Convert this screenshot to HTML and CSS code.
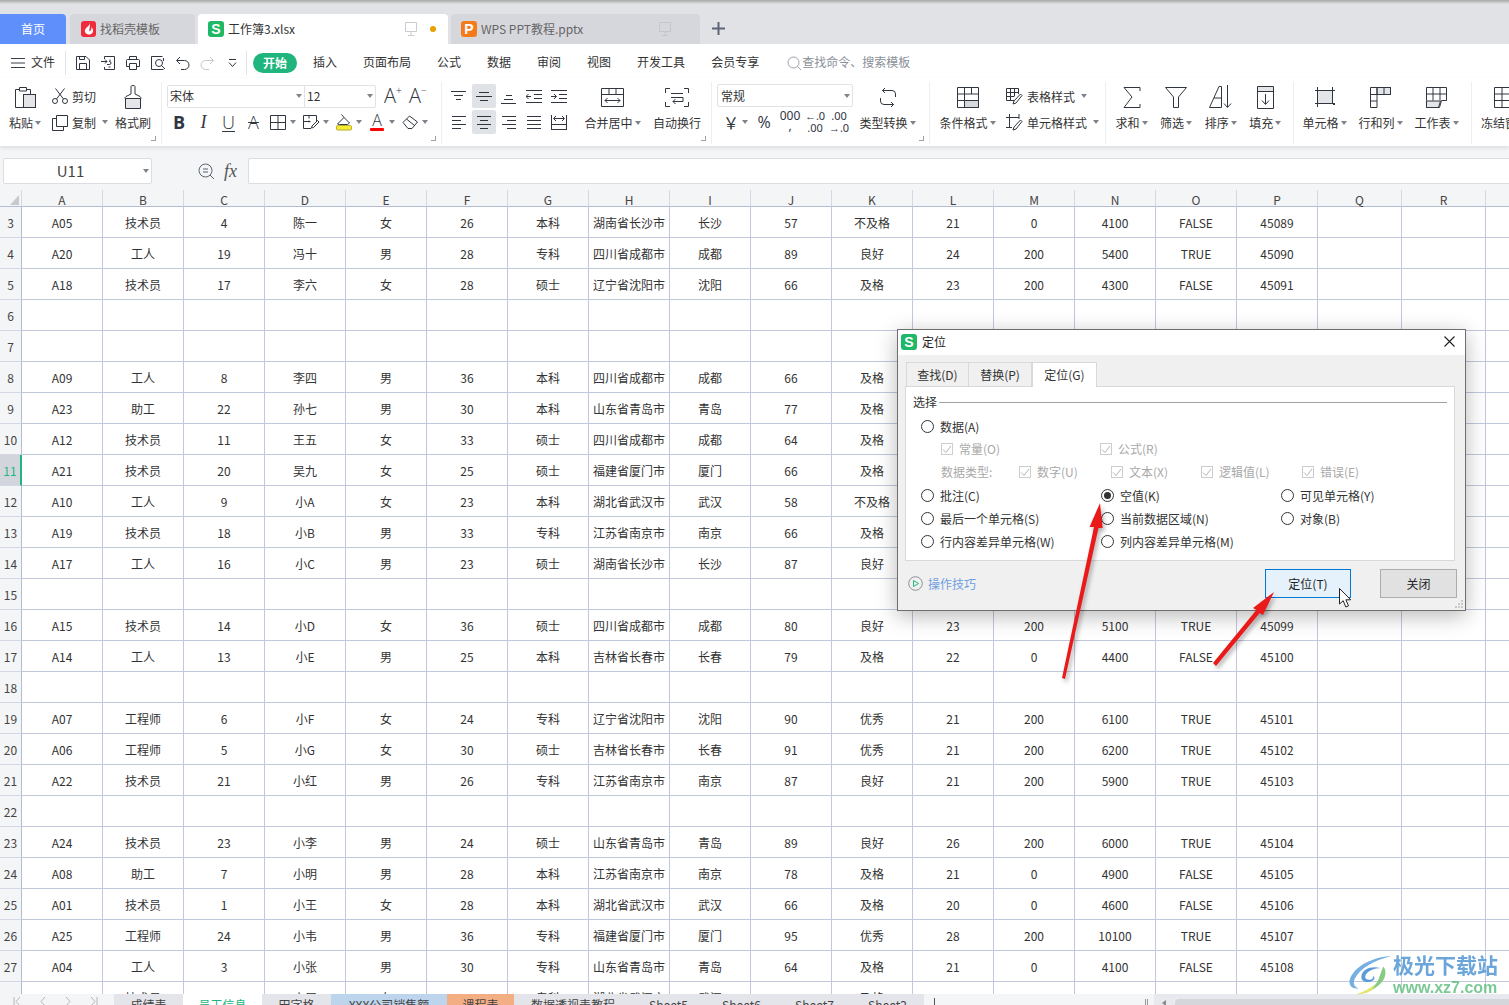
FILE: index.html
```html
<!DOCTYPE html>
<html lang="zh-CN">
<head>
<meta charset="utf-8">
<title>工作簿3.xlsx</title>
<link rel="stylesheet" href="styles.css">
</head>
<body>
<div class="app">
  <div class="topline"></div>
  <nav class="doctabs">
    <div class="dt dt-home">首页</div>
    <div class="dt dt-off dt-tpl">
      <span class="logo logo-red"><svg width="10" height="12" viewBox="0 0 10 12"><path d="M5.500 0C6 3 2 4 1 7c-.6 2.300 1.200 4.500 4 4.500 2.500 0 4.500-2 4-4.500-.3-1.500-1-2.500-1.500-3C7.500 6 7 7.500 5.500 8.500 4.800 6 6.800 3 5.500 0z" fill="#fff"/></svg></span>
      <span>找稻壳模板</span>
    </div>
    <div class="dt dt-on">
      <span class="logo logo-green">S</span>
      <span class="dt-name">工作簿3.xlsx</span>
      <svg class="mon" width="12" height="14" viewBox="0 0 12 14"><path d="M.500.500h11v9H.500zM6 9.500v4M3 13.500h6" fill="none" stroke="#c6ccd2"/></svg>
      <i class="dot"></i>
    </div>
    <div class="dt dt-off dt-ppt">
      <span class="logo logo-orange">P</span>
      <span class="dt-name">WPS PPT教程.pptx</span>
      <svg class="mon" width="12" height="14" viewBox="0 0 12 14"><path d="M.500.500h11v9H.500zM6 9.500v4M3 13.500h6" fill="none" stroke="#c3c6cb"/></svg>
    </div>
    <svg class="plus" width="13" height="13" viewBox="0 0 13 13"><path d="M6.500 0v13M0 6.500h13" stroke="#5c6675" stroke-width="2"/></svg>
  </nav>

  <div class="menubar">
    <svg class="burger" width="14" height="10" viewBox="0 0 14 10"><path d="M0 .500h14M0 5h14M0 9.500h14" stroke="#39404a"/></svg>
    <span class="file">文件</span>
    <i class="vsep vsep-a"></i>
    <span class="qa"><svg class="ic" width="16" height="16" viewBox="0 0 16 16"><path d="M1.500 1.500h9.500l3.500 3.500v9.500h-13zM4.500 14.500v-6h7v6M4.500 1.500v3h5v-3"/></svg></span>
    <span class="qa"><svg class="ic" width="16" height="16" viewBox="0 0 16 16"><path d="M4.500 4V1.500h10v13h-10V12M1 6.500h6M5 4.500l2 2-2 2M7 9.500h2.500a1.500 1.500 0 0 0 0-3H9M10 6.500V4.500M8.500 12h2"/></svg></span>
    <span class="qa"><svg class="ic" width="16" height="16" viewBox="0 0 16 16"><path d="M4.500 5V1.500h7V5M4.500 11.500h-3v-6q0-1 1-1h11q1 0 1 1v6h-3M4.500 8.500h7v6h-7z"/></svg></span>
    <span class="qa"><svg class="ic" width="16" height="16" viewBox="0 0 16 16"><path d="M12.500 1.500h-11v13h12M13.500 3v3"/><circle cx="9" cy="8" r="3.500"/><path d="M11.500 10.500l3.500 3.500"/></svg></span>
    <span class="qa"><svg class="ic" width="15" height="15" viewBox="0 0 15 15"><path d="M5 1L1.500 4.500 5 8M2 4.500h7.500a4.500 4.500 0 0 1 0 9H6"/></svg></span>
    <span class="qa"><svg class="ic ic-off" width="15" height="15" viewBox="0 0 15 15"><path d="M10 1l3.500 3.500L10 8M13 4.500H5.500a4.500 4.500 0 0 0 0 9H9"/></svg></span>
    <span class="qa"><svg class="ic" width="9" height="9" viewBox="0 0 9 9"><path d="M1 .500h7M1 3.500l3.500 4 3.500-4"/></svg></span>
    <i class="vsep vsep-b"></i>
    <span class="pill">开始</span>
    <div class="mtabs">
      <span>插入</span><span>页面布局</span><span>公式</span><span>数据</span><span>审阅</span><span>视图</span><span>开发工具</span><span>会员专享</span>
    </div>
    <div class="msearch">
      <svg width="15" height="15" viewBox="0 0 15 15"><circle cx="6.500" cy="6.500" r="5.500" fill="none" stroke="#9aa1ab"/><path d="M10.500 10.500l3.500 3.500" stroke="#9aa1ab"/></svg>
      <span>查找命令、搜索模板</span>
    </div>
  </div>

  <div class="ribbon">
    <section class="group g1">
      <div class="big b-paste">
        <svg class="ic" width="22" height="24" viewBox="0 0 22 24"><path d="M9 22.500H1.500v-18h4M12.500 4.500h4V9M5.500 2.500h7v3.500h-7z"/><rect class="fillg" x="9.500" y="9.500" width="12" height="13"/></svg>
        <span class="lbl">粘贴<i class="caret"></i></span>
      </div>
      <div class="col c-clip">
        <div class="small"><svg class="ic" width="16" height="16" viewBox="0 0 16 16"><circle cx="3" cy="13" r="2.500"/><circle cx="13" cy="13" r="2.500"/><path d="M4.500 11L12.500.500M11.500 11L3.500.500"/></svg><span>剪切</span></div>
        <div class="small"><svg class="ic" width="16" height="17" viewBox="0 0 16 17"><path d="M4.500 12.500v-11h11v11zM4.500 4.500h-4v12h11v-4"/></svg><span>复制</span><i class="caret"></i></div>
      </div>
      <div class="big b-brush">
        <svg class="ic" width="18" height="25" viewBox="0 0 18 25"><path d="M7 9V1.500q0-1 2-1t2 1V9l5 2.500q1 .5 1 2v0H1v0q0-1.500 1-2z"/><path class="fillg" d="M1.500 13.500h15v10h-15z"/></svg>
        <span class="lbl">格式刷</span>
      </div>
      <i class="launch"></i>
    </section>

    <section class="group g2">
      <div class="col">
        <div class="r-font">
          <div class="combo combo-font">
            <span class="cb-a">宋体<i class="caret"></i></span>
            <span class="cb-b">12<i class="caret"></i></span>
          </div>
          <span class="glyph g-plus">A<sup>+</sup></span>
          <span class="glyph g-minus">A<sup>−</sup></span>
        </div>
        <div class="r-fmt">
          <span class="fb f-b">B</span>
          <span class="fb f-i">I</span>
          <span class="fb f-u">U</span>
          <span class="fb f-s">A</span>
          <span class="fbc"><span class="fb"><svg class="ic" width="16" height="15" viewBox="0 0 16 15"><path d="M.500.500h15v14H.500zM8 .500v14M.500 7.500h15"/></svg></span><i class="caret"></i></span>
          <span class="fbc"><span class="fb"><svg class="ic" width="17" height="16" viewBox="0 0 17 16"><path d="M8 14.500H.500v-13h13v6M.500 7.500h7M6 1.500v3M6 6.500v2M16 8l-1.500-1.500L9 12l-.500 2 2-.500z"/></svg></span><i class="caret"></i></span>
          <span class="fbc"><span class="fb"><svg class="ic" width="17" height="18" viewBox="0 0 17 18"><path d="M1.500 11L8 4.500l5.500 5.500-2 1.500H3.500zM8 4.500L5.500 1.500"/><rect x=".500" y="12.500" width="15" height="4.500" rx="1" fill="#f7ee2e" stroke="#b9ad3c"/></svg></span><i class="caret"></i></span>
          <span class="fbc"><span class="fb f-color">A</span><i class="caret"></i></span>
          <span class="fbc"><span class="fb"><svg class="ic" width="17" height="14" viewBox="0 0 17 14"><path d="M1 7.500l6.500-6.500 8 6-5.500 6.500H6zM4.500 4l8 6.500" /></svg></span><i class="caret"></i></span>
        </div>
      </div>
      <i class="launch"></i>
    </section>

    <section class="group g3">
      <div class="aligns">
        <span class="al"><svg class="ic" width="16" height="11" viewBox="0 0 16 11"><path d="M0 .500h15M3 4.500h9M5 8.500h5"/></svg></span>
        <span class="al al-on"><svg class="ic" width="16" height="9" viewBox="0 0 16 9"><path d="M3 .500h10M0 4.500h16M4 8.500h8"/></svg></span>
        <span class="al"><svg class="ic al-low" width="16" height="9" viewBox="0 0 16 9"><path d="M5 .500h6M3 4.500h9M0 8.500h15"/></svg></span>
        <span class="al"><svg class="ic" width="16" height="13" viewBox="0 0 16 13"><path d="M0 .500h16M8 4.500h8M8 8.500h8M0 12.500h16M5 6.500H0M2.500 4L0 6.500 2.500 9"/></svg></span>
        <span class="al"><svg class="ic" width="16" height="13" viewBox="0 0 16 13"><path d="M0 .500h16M8 4.500h8M8 8.500h8M0 12.500h16M0 6.500h5M3 4l2.500 2.500L3 9"/></svg></span>
        <span class="al"><svg class="ic" width="14" height="13" viewBox="0 0 14 13"><path d="M0 .500h14M0 4.500h9M0 8.500h14M0 12.500h9"/></svg></span>
        <span class="al al-on"><svg class="ic" width="14" height="13" viewBox="0 0 14 13"><path d="M0 .500h14M3 4.500h8M0 8.500h14M3 12.500h8"/></svg></span>
        <span class="al"><svg class="ic" width="14" height="13" viewBox="0 0 14 13"><path d="M0 .500h14M5 4.500h9M0 8.500h14M5 12.500h9"/></svg></span>
        <span class="al"><svg class="ic" width="14" height="13" viewBox="0 0 14 13"><path d="M0 .500h14M0 4.500h14M0 8.500h14M0 12.500h14"/></svg></span>
        <span class="al"><svg class="ic" width="16" height="15" viewBox="0 0 16 15"><path d="M.500 0v15M15.500 0v15M.500 14.500h15M.500 9.500h15M3 3.500h10M5 1L2.500 3.500 5 6M11 1l2.500 2.500L11 6"/></svg></span>
      </div>
      <div class="big b-merge">
        <svg class="ic" width="23" height="19" viewBox="0 0 23 19"><path d="M.500.500h22v18H.500zM.500 6.500h22M8 .500v6M15 .500v6M4 12.500h15M6.500 10L4 12.500 6.500 15M16.500 10l2.500 2.500-2.500 2.500"/></svg>
        <span class="lbl">合并居中<i class="caret"></i></span>
      </div>
      <div class="big b-wrap">
        <svg class="ic" width="24" height="19" viewBox="0 0 24 19"><path d="M5 .500H.500V5M19 .500h4.500V5M5 18.500H.500V14M19 18.500h4.500V14M6 5.500h12M6 9.500h12v4H8M10.500 11L8 13.500l2.500 2.500"/></svg>
        <span class="lbl">自动换行</span>
      </div>
      <i class="launch"></i>
    </section>

    <section class="group g4">
      <div class="col">
        <div class="combo combo-num"><span class="cb-a">常规<i class="caret"></i></span></div>
        <div class="r-num">
          <span class="n n-yen">￥</span><i class="caret"></i>
          <span class="n n-pct">%</span>
          <span class="n n-th">000<br>,</span>
          <span class="n n-sm">←.0<br>.00</span>
          <span class="n n-sm">.00<br>→.0</span>
        </div>
      </div>
      <div class="big b-conv">
        <svg class="ic" width="18" height="21" viewBox="0 0 18 21"><path d="M6 1L3.500 3.500 6 6M3.500 3.500H13q3.500 0 3.500 3.500v3M12 20l2.500-2.500L12 15M14.500 17.500H5q-3.500 0-3.500-3.500v-3"/></svg>
        <span class="lbl">类型转换<i class="caret"></i></span>
      </div>
      <i class="launch"></i>
    </section>

    <section class="group g5">
      <div class="big b-cond">
        <svg class="ic" width="22" height="21" viewBox="0 0 22 21"><path d="M.500.500h21v20H.500zM.500 7h21M.500 13.500h21M7.500.500v20M14.500.500v6.500"/><rect class="fillg2" x="7.500" y="13.500" width="14" height="7"/></svg>
        <span class="lbl">条件格式<i class="caret"></i></span>
      </div>
      <div class="col c-style">
        <div class="small"><svg class="ic" width="17" height="17" viewBox="0 0 17 17"><path d="M8 12.500H.500V.500h12V6M.500 4.500h12M.500 8.500h8M4.500.500v12M8.500.500V8M16 7.500L14.500 6 8 13l-1 3 3-1z"/></svg><span>表格样式</span><i class="caret"></i></div>
        <div class="small"><svg class="ic" width="17" height="17" viewBox="0 0 17 17"><path d="M3.500 0v14M0 3.500h13M13 0v5M0 13.500h6M16 7.500L14.500 6 8 13l-1 3 3-1z"/></svg><span>单元格样式</span><i class="caret"></i></div>
      </div>
    </section>

    <section class="group g6">
      <div class="big b4"><svg class="ic" width="18" height="21" viewBox="0 0 18 21"><path d="M17 4V.500H1L9 10 1 20.500h16V17"/></svg><span class="lbl">求和<i class="caret"></i></span></div>
      <div class="big b4"><svg class="ic" width="22" height="21" viewBox="0 0 22 21"><path d="M.500.500h21L13.500 10v10.500h-5V10z"/></svg><span class="lbl">筛选<i class="caret"></i></span></div>
      <div class="big b4"><svg class="ic" width="24" height="24" viewBox="0 0 24 24"><path d="M.500 22.500L10 1.500h2.500v21zM5 13h7.500M18.500 0v22M15 18.500l3.500 4 3.500-4"/></svg><span class="lbl">排序<i class="caret"></i></span></div>
      <div class="big b4"><svg class="ic" width="17" height="23" viewBox="0 0 17 23"><path d="M1 1h15v4H1z" fill="#e3e5e8" stroke="none"/><path d="M.500.500h16v22H.500zM.500 5.500h16M8.500 8v10M5 14.500l3.500 4 3.500-4"/></svg><span class="lbl">填充<i class="caret"></i></span></div>
    </section>

    <section class="group g7">
      <div class="big b3"><svg class="ic" width="20" height="20" viewBox="0 0 20 20"><rect class="fillg" x="2.500" y="3.500" width="15" height="13"/><path d="M0 3.500h20M0 16.500h17M2.500 0v20M17.500 0v16"/><rect x="18" y="16" width="2" height="2" fill="#30363f" stroke="none"/></svg><span class="lbl">单元格<i class="caret"></i></span></div>
      <div class="big b3"><svg class="ic" width="21" height="21" viewBox="0 0 21 21"><rect class="fillg" x="7" y=".500" width="13.500" height="7"/><path d="M.500 20.500V.500h20v7H7v13zM.500 7.500H7M.500 14h6.500M7 .500v7M14 .500v7"/></svg><span class="lbl">行和列<i class="caret"></i></span></div>
      <div class="big b3"><svg class="ic" width="21" height="21" viewBox="0 0 21 21"><path class="fillg" d="M.500 14h14l-2 6.500H.500z"/><path d="M.500 13.500V.500h20v13h-5l-2 7H.500zM.500 7h20M7 .500V13.500M14 .500v13"/></svg><span class="lbl">工作表<i class="caret"></i></span></div>
    </section>

    <section class="group g8">
      <div class="big b-freeze"><svg class="ic" width="22" height="21" viewBox="0 0 22 21"><path d="M.500.500h21v20H.500zM.500 7h21M.500 13.500h21M8 .500v20"/></svg><span class="lbl">冻结窗格</span></div>
    </section>
  </div>

  <div class="fbar">
    <div class="namebox"><span>U11</span><i class="caret"></i></div>
    <svg class="zoomic" width="17" height="17" viewBox="0 0 17 17"><circle cx="7.500" cy="7.500" r="6.500" fill="none" stroke="#5b6470"/><path d="M12 12l4 4M5 6h5M5 9h5" stroke="#5b6470"/></svg>
    <span class="fx">fx</span>
    <div class="finput"></div>
  </div>

  <div class="sheet">
    <table class="grid">
      <colgroup><col class="c-rh"><col span="16" class="c-n"><col span="2" class="c-w"><col class="c-e"></colgroup>
      <thead><tr><th class="corner"><i></i></th><th>A</th><th>B</th><th>C</th><th>D</th><th>E</th><th>F</th><th>G</th><th>H</th><th>I</th><th>J</th><th>K</th><th>L</th><th>M</th><th>N</th><th>O</th><th>P</th><th>Q</th><th>R</th><th></th></tr></thead>
      <tbody>
<tr><th>3</th><td>A05<td>技术员<td>4<td>陈一<td>女<td>26<td>本科<td>湖南省长沙市<td>长沙<td>57<td>不及格<td>21<td>0<td>4100<td>FALSE<td>45089<td><td><td></tr>
<tr><th>4</th><td>A20<td>工人<td>19<td>冯十<td>男<td>28<td>专科<td>四川省成都市<td>成都<td>89<td>良好<td>24<td>200<td>5400<td>TRUE<td>45090<td><td><td></tr>
<tr><th>5</th><td>A18<td>技术员<td>17<td>李六<td>女<td>28<td>硕士<td>辽宁省沈阳市<td>沈阳<td>66<td>及格<td>23<td>200<td>4300<td>FALSE<td>45091<td><td><td></tr>
<tr><th>6</th><td><td><td><td><td><td><td><td><td><td><td><td><td><td><td><td><td><td><td></tr>
<tr><th>7</th><td><td><td><td><td><td><td><td><td><td><td><td><td><td><td><td><td><td><td></tr>
<tr><th>8</th><td>A09<td>工人<td>8<td>李四<td>男<td>36<td>本科<td>四川省成都市<td>成都<td>66<td>及格<td><td><td><td><td><td><td><td></tr>
<tr><th>9</th><td>A23<td>助工<td>22<td>孙七<td>男<td>30<td>本科<td>山东省青岛市<td>青岛<td>77<td>及格<td><td><td><td><td><td><td><td></tr>
<tr><th>10</th><td>A12<td>技术员<td>11<td>王五<td>女<td>33<td>硕士<td>四川省成都市<td>成都<td>64<td>及格<td><td><td><td><td><td><td><td></tr>
<tr><th class="cur">11</th><td>A21<td>技术员<td>20<td>吴九<td>女<td>25<td>硕士<td>福建省厦门市<td>厦门<td>66<td>及格<td><td><td><td><td><td><td><td></tr>
<tr><th>12</th><td>A10<td>工人<td>9<td>小A<td>女<td>23<td>本科<td>湖北省武汉市<td>武汉<td>58<td>不及格<td><td><td><td><td><td><td><td></tr>
<tr><th>13</th><td>A19<td>技术员<td>18<td>小B<td>男<td>33<td>专科<td>江苏省南京市<td>南京<td>66<td>及格<td><td><td><td><td><td><td><td></tr>
<tr><th>14</th><td>A17<td>工人<td>16<td>小C<td>男<td>23<td>硕士<td>湖南省长沙市<td>长沙<td>87<td>良好<td><td><td><td><td><td><td><td></tr>
<tr><th>15</th><td><td><td><td><td><td><td><td><td><td><td><td><td><td><td><td><td><td><td></tr>
<tr><th>16</th><td>A15<td>技术员<td>14<td>小D<td>女<td>36<td>硕士<td>四川省成都市<td>成都<td>80<td>良好<td>23<td>200<td>5100<td>TRUE<td>45099<td><td><td></tr>
<tr><th>17</th><td>A14<td>工人<td>13<td>小E<td>男<td>25<td>本科<td>吉林省长春市<td>长春<td>79<td>及格<td>22<td>0<td>4400<td>FALSE<td>45100<td><td><td></tr>
<tr><th>18</th><td><td><td><td><td><td><td><td><td><td><td><td><td><td><td><td><td><td><td></tr>
<tr><th>19</th><td>A07<td>工程师<td>6<td>小F<td>女<td>24<td>专科<td>辽宁省沈阳市<td>沈阳<td>90<td>优秀<td>21<td>200<td>6100<td>TRUE<td>45101<td><td><td></tr>
<tr><th>20</th><td>A06<td>工程师<td>5<td>小G<td>女<td>30<td>硕士<td>吉林省长春市<td>长春<td>91<td>优秀<td>21<td>200<td>6200<td>TRUE<td>45102<td><td><td></tr>
<tr><th>21</th><td>A22<td>技术员<td>21<td>小红<td>男<td>26<td>专科<td>江苏省南京市<td>南京<td>87<td>良好<td>21<td>200<td>5900<td>TRUE<td>45103<td><td><td></tr>
<tr><th>22</th><td><td><td><td><td><td><td><td><td><td><td><td><td><td><td><td><td><td><td></tr>
<tr><th>23</th><td>A24<td>技术员<td>23<td>小李<td>男<td>24<td>硕士<td>山东省青岛市<td>青岛<td>89<td>良好<td>26<td>200<td>6000<td>TRUE<td>45104<td><td><td></tr>
<tr><th>24</th><td>A08<td>助工<td>7<td>小明<td>男<td>28<td>本科<td>江苏省南京市<td>南京<td>78<td>及格<td>21<td>0<td>4900<td>FALSE<td>45105<td><td><td></tr>
<tr><th>25</th><td>A01<td>技术员<td>1<td>小王<td>女<td>28<td>本科<td>湖北省武汉市<td>武汉<td>66<td>及格<td>20<td>0<td>4600<td>FALSE<td>45106<td><td><td></tr>
<tr><th>26</th><td>A25<td>工程师<td>24<td>小韦<td>男<td>36<td>专科<td>福建省厦门市<td>厦门<td>95<td>优秀<td>28<td>200<td>10100<td>TRUE<td>45107<td><td><td></tr>
<tr><th>27</th><td>A04<td>工人<td>3<td>小张<td>男<td>30<td>专科<td>山东省青岛市<td>青岛<td>64<td>及格<td>21<td>0<td>4100<td>FALSE<td>45108<td><td><td></tr>
<tr><th>28</th><td>A13<td>技术员<td>12<td>小周<td>女<td>30<td>专科<td>湖北省武汉市<td>武汉<td>72<td>及格<td>21<td>0<td>4300<td>FALSE<td>45109<td><td><td></tr>
      </tbody>
    </table>
  </div>

  <div class="sheetbar">
    <div class="snav">
      <svg width="8" height="9" viewBox="0 0 8 9"><path d="M1 0v9M7 0L3 4.500 7 9" fill="none" stroke="#b3b7bf"/></svg>
      <svg width="6" height="9" viewBox="0 0 6 9"><path d="M5 0L1 4.500 5 9" fill="none" stroke="#b3b7bf"/></svg>
      <svg width="6" height="9" viewBox="0 0 6 9"><path d="M1 0l4 4.500L1 9" fill="none" stroke="#b3b7bf"/></svg>
      <svg width="8" height="9" viewBox="0 0 8 9"><path d="M7 0v9M1 0l4 4.500L1 9" fill="none" stroke="#b3b7bf"/></svg>
    </div>
    <span class="st st1">成绩表</span>
    <span class="st st2">员工信息</span>
    <span class="st st1">田字格</span>
    <span class="st st3">XXX公司销售额</span>
    <span class="st st4">课程表</span>
    <span class="st st5">数据透视表教程</span>
    <span class="st st6">Sheet5</span>
    <span class="st st6">Sheet6</span>
    <span class="st st6">Sheet7</span>
    <span class="st st6">Sheet2</span>
    <i class="sb-line"></i>
    <i class="sb-grip"></i>
    <div class="hscroll"><i class="hs-arrow"></i><i class="hs-thumb"></i></div>
  </div>
</div>

<div class="dialog">
  <div class="dlg-title">
    <span class="logo logo-green logo-dlg">S</span>
    <span class="dlg-name">定位</span>
    <svg class="dlg-x" width="11" height="11" viewBox="0 0 11 11"><path d="M.500.500l10 10M10.500.500l-10 10" stroke="#1f1f1f" stroke-width="1.100"/></svg>
  </div>
  <div class="dlg-tabs">
    <span class="dtab t1">查找(D)</span>
    <span class="dtab t1">替换(P)</span>
    <span class="dtab t-on">定位(G)</span>
  </div>
  <div class="panel">
    <div class="legend"><span>选择</span><i></i></div>
    <div class="opts">
      <div class="row"><label class="rd"><i class="radio"></i>数据(A)</label></div>
      <div class="row row-sub">
        <label class="ck"><i class="cbx"><svg width="10" height="9" viewBox="0 0 10 9"><path d="M1 4.500l3 3L9 1" fill="none" stroke="#b4b4b4"/></svg></i>常量(O)</label>
        <label class="ck"><i class="cbx"><svg width="10" height="9" viewBox="0 0 10 9"><path d="M1 4.500l3 3L9 1" fill="none" stroke="#b4b4b4"/></svg></i>公式(R)</label>
      </div>
      <div class="row row-type">
        <span class="ck">数据类型:</span>
        <label class="ck"><i class="cbx"><svg width="10" height="9" viewBox="0 0 10 9"><path d="M1 4.500l3 3L9 1" fill="none" stroke="#b4b4b4"/></svg></i>数字(U)</label>
        <label class="ck"><i class="cbx"><svg width="10" height="9" viewBox="0 0 10 9"><path d="M1 4.500l3 3L9 1" fill="none" stroke="#b4b4b4"/></svg></i>文本(X)</label>
        <label class="ck"><i class="cbx"><svg width="10" height="9" viewBox="0 0 10 9"><path d="M1 4.500l3 3L9 1" fill="none" stroke="#b4b4b4"/></svg></i>逻辑值(L)</label>
        <label class="ck"><i class="cbx"><svg width="10" height="9" viewBox="0 0 10 9"><path d="M1 4.500l3 3L9 1" fill="none" stroke="#b4b4b4"/></svg></i>错误(E)</label>
      </div>
      <div class="row row-3">
        <label class="rd"><i class="radio"></i>批注(C)</label>
        <label class="rd"><i class="radio radio-on"></i>空值(K)</label>
        <label class="rd"><i class="radio"></i>可见单元格(Y)</label>
      </div>
      <div class="row row-3">
        <label class="rd"><i class="radio"></i>最后一个单元格(S)</label>
        <label class="rd"><i class="radio"></i>当前数据区域(N)</label>
        <label class="rd"><i class="radio"></i>对象(B)</label>
      </div>
      <div class="row row-3">
        <label class="rd"><i class="radio"></i>行内容差异单元格(W)</label>
        <label class="rd"><i class="radio"></i>列内容差异单元格(M)</label>
      </div>
    </div>
  </div>
  <div class="dlg-foot">
    <svg width="15" height="15" viewBox="0 0 15 15"><circle cx="7.500" cy="7.500" r="6.800" fill="none" stroke="#8c9298"/><path d="M5.500 4.500l5 3-5 3z" fill="none" stroke="#23b77c"/></svg>
    <span class="tips">操作技巧</span>
    <span class="btn btn-pri">定位(T)</span>
    <span class="btn">关闭</span>
  </div>
  <svg class="dlg-grip" width="8" height="8" viewBox="0 0 8 8"><path d="M6 0h2v2H6zM3 3h2v2H3zM6 3h2v2H6zM0 6h2v2H0zM3 6h2v2H3zM6 6h2v2H6z" fill="#c9c9c9"/></svg>
</div>

<svg class="arrows" width="300" height="200" viewBox="0 0 300 200">
  <path d="M47 178L79 27 74.500 27 85 3 87.600 28 83.500 28 50 179z" fill="#ea1a1a"/>
  <path d="M198 163L241.300 110 238 108 259 92 248 115 244.700 113 201 166z" fill="#ea1a1a"/>
</svg>
<svg class="cursor" width="12" height="21" viewBox="0 0 12 21"><path d="M.500.500v15.500l3.700-3.300 2.600 6.300 2.700-1.100-2.600-6.100h4.800z" fill="#fff" stroke="#222"/></svg>

<div class="wmark">
  <svg class="wm-logo" width="44" height="41" viewBox="0 0 46 41">
    <path d="M44 0C26 1 6 10 1 24c-2 7 2 11 9 10-5-2-6-6-4-10C11 13 26 5 44 0z" fill="#6ba9e0"/>
    <path d="M33 13c-9-3-19 1-20 8-1 5 4 7 9 6 5-1 6-5 3-6 1 2-1 4-4 4-4 0-5-3-3-6 3-4 9-6 15-6z" fill="#4f93d4"/>
    <path d="M36 11c5 7 1 16-8 22-6 4-14 7-20 7 9-2 17-6 21-12 3-5 4-11 7-17z" fill="#7cc777"/>
    <path d="M27 30c-5 4-12 8-19 10 3 0 7 0 12-2 3-1 6-4 7-8z" fill="#e4e35c"/>
  </svg>
  <div class="wm-text">
    <span class="wm-cn">极光下载站</span>
    <span class="wm-en">www.xz7.com</span>
  </div>
</div>
</body>
</html>
```
FILE: styles.css
```css
* { box-sizing: border-box; }
html, body { margin: 0; padding: 0; height: 100%; overflow: hidden; }
body { font: 12px/16px "Noto Sans CJK SC", "Noto Sans", sans-serif; color: #333; background: #fff; }
i { font-style: normal; display: block; }
.app { width: 1509px; height: 1005px; display: flex; flex-direction: column; overflow: hidden; }
.app > * { flex: none; }

.caret { width: 0; height: 0; border: 3.5px solid transparent; border-top: 4px solid #7f848c; border-bottom: 0; flex: none; }

/* title strip */
.topline { height: 4px; background: linear-gradient(#a7a7a7, #c9c9cb 60%, #e1e2e6); }
.doctabs { height: 40px; background: #e1e2e6; display: flex; align-items: flex-end; }
.dt { height: 30px; display: flex; align-items: center; border-radius: 4px 4px 0 0; color: #666; }
.dt-home { width: 66px; background: #5f8ffb; color: #fff; justify-content: center; border-radius: 0 4px 0 0; margin-right: 4px; }
.dt-off { background: #d6d7dc; }
.dt-tpl { width: 125px; padding-left: 11px; margin-right: 3px; }
.dt-on { width: 250px; background: #fff; padding-left: 10px; margin-right: 3px; color: #333; }
.dt-ppt { width: 249px; padding-left: 10px; color: #666; }
.dt-name { font-size: 12px; }
.logo { width: 16px; height: 16px; border-radius: 3px; display: flex; align-items: center; justify-content: center; color: #fff; font: bold 14px/16px "Liberation Sans", sans-serif; flex: none; margin-right: 4px; }
.logo-red { width: 15px; background: #f02c3c; }
.logo-green { background: #1fb866; }
.logo-orange { background: #f47b1c; }
.mon { margin-left: 110px; }
.dot { width: 6px; height: 6px; border-radius: 50%; background: #e8a100; margin-left: 13px; }
.dt-ppt .mon { margin-left: 76px; }
.plus { margin: 0 0 9px 12px; }

/* menu */
.menubar { height: 34px; background: #fff; display: flex; align-items: center; padding: 4px 0 0 11px; }
.burger { flex: none; }
.file { margin: -2px 0 0 6px; }
.vsep { width: 1px; height: 24px; background: #e2e4e8; flex: none; }
.vsep-a { margin: 0 4px 0 10px; }
.vsep-b { margin: 0 6px 0 1px; }
.qa { width: 25px; display: flex; justify-content: center; align-items: center; }
.ic { fill: none; stroke: #30363f; stroke-width: 1; flex: none; }
.ic-off { stroke: #c5c8cc; }
.pill { width: 44px; height: 20px; border-radius: 10px; background: #20b57c; color: #fff; font-weight: 700; text-align: center; line-height: 19px; }
.mtabs { display: flex; gap: 26px; margin: -2px 0 0 16px; color: #333; }
.msearch { display: flex; align-items: center; margin: -2px 0 0 28px; color: #8a8f98; }
.msearch svg { margin-top: 2px; }

/* ribbon */
.ribbon { height: 68px; background: #fff; display: flex; padding: 4px 0 2px; box-shadow: 0 2px 4px rgba(0,0,0,.1); position: relative; z-index: 2; overflow: hidden; }
.group { position: relative; display: flex; height: 62px; padding-top: 2px; border-right: 1px solid #eceef1; flex: none; }
.g1 { width: 162px; padding-left: 8px; }
.g2 { width: 280px; padding-left: 5px; }
.g3 { width: 270px; padding-left: 5px; }
.g4 { width: 218px; padding-left: 5px; }
.g5 { width: 176px; padding-left: 9px; }
.g6 { width: 188px; padding-left: 9px; gap: 11.6px; }
.g7 { width: 178px; padding-left: 8px; gap: 11px; }
.g8 { padding-left: 9px; border: 0; }
.launch { position: absolute; right: 5px; bottom: 3px; width: 5px; height: 5px; border-right: 1px solid #9ea2a9; border-bottom: 1px solid #9ea2a9; }
.col { display: flex; flex-direction: column; gap: 2px; }
.big { display: grid; grid-template-rows: 26px 24px; justify-items: center; align-items: center; flex: none; }
.lbl { display: flex; align-items: center; gap: 2px; white-space: nowrap; line-height: 24px; padding-top: 1px; }
.fillg { fill: #e3e5e8; stroke: #30363f; }
.fillg2 { fill: #d5d8dc; stroke: #30363f; }
.small { height: 24px; display: flex; align-items: center; gap: 4px; white-space: nowrap; }
.small > span { padding-top: 2px; }
.small .caret { margin-left: 2px; }
.b-paste { width: 34px; }
.c-clip { width: 56px; margin-left: 10px; }
.b-brush { width: 36px; margin-left: 7px; }

.r-font { height: 24px; display: flex; align-items: center; }
.combo { height: 23px; border: 1px solid #e0e2e6; border-radius: 2px; display: flex; background: #fff; }
.combo span { display: flex; align-items: center; justify-content: space-between; padding: 0 2px; }
.combo-font { width: 209px; }
.cb-a { flex: 1; border-right: 1px solid #e0e2e6; }
.cb-b { width: 70px; padding: 0 2px !important; }
.combo-num { width: 136px; }
.combo-num .cb-a { border: 0; padding: 0 2px 0 3px; }
.combo-num { margin-bottom: 1px; }
.glyph { font: 300 20px/24px "Open Sans", sans-serif; color: #30363f; position: relative; width: 20px; text-align: left; }
.glyph sup { font-size: 10px; line-height: 0; position: relative; top: -1px; }
.g-plus { margin-left: 8px; }
.g-minus { margin-left: 5px; }
.r-fmt { display: flex; align-items: center; height: 24px; }
.fb { width: 24px; height: 24px; display: flex; align-items: center; justify-content: center; flex: none; color: #30363f; font: 18px/24px "Open Sans", sans-serif; }
.f-b { font-weight: 700; }
.f-i { width: 25px; font: italic 18px/24px "Liberation Serif", serif; }
.f-u { width: 25px; text-decoration: underline; text-underline-offset: 2px; text-decoration-thickness: 1px; font-weight: 300; }
.f-s { width: 25px; text-decoration: line-through; text-decoration-thickness: 1px; font-weight: 300; }
.fbc { display: flex; align-items: center; margin-left: 3px; }
.f-s + .fbc { margin-left: 0; }
.f-color { font: 300 16px/14px "Open Sans", sans-serif; flex-direction: column; }
.f-color::after { content: ""; width: 14px; height: 3px; background: #f00; margin-top: 1px; border-radius: 1px; }

.aligns { display: grid; grid-template-columns: repeat(5, 25px); grid-auto-rows: 24px; row-gap: 2px; height: 50px; }
.al { width: 24px; height: 24px; display: flex; align-items: center; justify-content: center; border-radius: 2px; }
.al-on { background: #dfe2e6; }
.al-low { margin-top: 6px; }
.b-merge { width: 59px; margin-left: 11px; }
.b-wrap { width: 48px; margin-left: 11px; }

.r-num { display: flex; align-items: center; height: 24px; }
.n { display: block; text-align: center; color: #30363f; }
.n-yen { width: 22px; margin-left: 3px; font-size: 16px; line-height: 24px; }
.n-pct { width: 24px; margin-left: 4px; font: 16px/24px "Open Sans", sans-serif; }
.n-th { width: 24px; margin-left: 2px; font: 12px/10px "Noto Sans", sans-serif; margin-top: -3px; }
.n-sm { width: 22px; margin-left: 2px; font: 11px/12px "Noto Sans", sans-serif; white-space: nowrap; margin-top: -1px; }
.b-conv { width: 59px; margin-left: 5px; }

.b-cond { width: 57px; }
.c-style { margin-left: 10px; }
.b4 { width: 33px; }
.b3 { width: 45px; }
.b-freeze { width: 48px; }

/* formula bar */
.fbar { height: 44px; background: #f4f5f7; display: flex; align-items: flex-start; padding: 12px 0 0 3px; }
.namebox { width: 149px; height: 26px; background: #fff; border: 1px solid #dcdde1; border-radius: 2px; display: flex; align-items: center; padding-right: 2px; }
.namebox span { flex: 1; text-align: center; font-size: 15px; margin-right: 6px; color: #444; }
.zoomic { margin: 5px 0 0 46px; }
.fx { font: italic 18px/26px "Liberation Serif", serif; width: 24px; margin-left: 9px; color: #555; }
.finput { flex: 1; height: 26px; background: #fff; border: 1px solid #dcdde1; border-right: 0; border-radius: 2px 0 0 2px; }

/* grid */
.sheet { height: 804px; overflow: hidden; background: #fff; }
.grid { border-collapse: separate; border-spacing: 0; table-layout: fixed; width: 1509px; color: #333; }
.c-rh { width: 22px; } .c-n { width: 81px; } .c-w { width: 84px; } .c-e { width: 24px; }
.grid td, .grid tbody th { height: 31px; padding: 2px 0 0; text-align: center; font-weight: 400; line-height: 28px; border-right: 1px solid #c2c8dc; border-bottom: 1px solid #c2c8dc; white-space: nowrap; overflow: hidden; }
.grid thead th { height: 17px; padding: 3px 0 0; font-weight: 400; line-height: 13px; color: #444; background: #f4f5f7; border-bottom: 1px solid #b4bcd4; border-right: 1px solid #d4d8e4; }
.grid tbody th { background: #f4f5f7; color: #444; border-right-color: #b4bcd4; border-bottom-color: #d4d8e4; }
.grid tbody th.cur { background: #d2d5db; color: #20b57c; border-right: 2px solid #20b57c; }
.corner { position: relative; }
.corner i { position: absolute; left: 10px; top: 5px; width: 0; height: 0; border-left: 9px solid transparent; border-bottom: 10px solid #c8c9cc; }

/* sheet tabs */
.sheetbar { height: 24px; background: #f4f5f7; display: flex; position: relative; line-height: 22px; }
.snav { width: 114px; display: flex; align-items: flex-start; padding: 3px 0 0 13px; gap: 19px; }
.st { text-align: center; color: #444; flex: none; }
.st1 { width: 69px; background: #e4e5ea; }
.st2 { width: 79px; background: #fff; color: #20b57c; }
.st3 { width: 116px; background: #bcd4ec; }
.st4 { width: 67px; background: #f4ae84; }
.st5 { width: 118px; background: #e4e5ea; }
.st6 { width: 73px; background: #e4e5ea; }
.sb-line { width: 1px; height: 12px; background: #555; margin: 4px 0 0 10px; }
.sb-grip { width: 3px; height: 10px; border-left: 1px solid #999; border-right: 1px solid #999; margin: 5px 0 0 210px; }
.hscroll { flex: 1; display: flex; background: #e8e9ee; margin-left: 6px; align-items: flex-start; }
.hs-arrow { width: 0; height: 0; border: 3px solid transparent; border-right: 4px solid #888; margin: 6px 0 0 5px; }
.hs-thumb { flex: 1; height: 20px; margin: 5px 0 0 9px; background: #d5d6dc; border-radius: 4px 0 0 0; }

/* dialog */
.dialog { position: absolute; left: 897px; top: 329px; width: 569px; height: 282px; background: #f0f0f0; border: 1px solid #6e6e6e; box-shadow: 0 5px 20px rgba(0,0,0,.28); z-index: 5; display: flex; flex-direction: column; }
.dlg-title { height: 25px; background: #fff; display: flex; align-items: center; padding: 0 10px 2px 3px; flex: none; }
.logo-dlg { margin-right: 5px; }
.dlg-name { flex: 1; color: #222; }
.dlg-tabs { height: 31px; display: flex; align-items: flex-end; padding-left: 8px; flex: none; position: relative; z-index: 1; }
.dtab { height: 24px; line-height: 23px; text-align: center; border: 1px solid #d9d9d9; border-bottom: 0; color: #333; background: #f0f0f0; }
.t1 { width: 63px; }
.t1 + .t1 { border-left: 0; }
.t-on { width: 65px; height: 25px; background: #fff; margin-bottom: -1px; line-height: 23px; }
.panel { height: 175px; margin: 0 10px 0 7px; background: #fff; border: 1px solid #d9d9d9; padding: 7px 7px 0 7px; flex: none; }
.legend { display: flex; align-items: center; height: 16px; gap: 2px; }
.legend i { flex: 1; height: 1px; background: #a0a0a0; }
.opts { padding: 5px 0 0 8px; }
.row { height: 23px; display: grid; align-items: center; }
.row-sub { grid-template-columns: 159px 1fr; padding-left: 20px; height: 22px; }
.row-type { grid-template-columns: 78px 92px 90px 101px 1fr; padding-left: 20px; height: 24px; }
.row-3 { grid-template-columns: 180px 180px 1fr; }
.rd, .ck { display: flex; align-items: center; white-space: nowrap; }
.rd { gap: 6px; color: #333; }
.ck { gap: 6px; color: #a9a9a9; }
.radio { width: 13px; height: 13px; border: 1px solid #333; border-radius: 50%; background: #fff; flex: none; position: relative; }
.radio-on::after { content: ""; position: absolute; inset: 2px; border-radius: 50%; background: #333; }
.cbx { width: 12px; height: 12px; border: 1px solid #cdcdcd; background: #fff; flex: none; display: flex; align-items: center; justify-content: center; }
.dlg-foot { flex: 1; display: flex; align-items: flex-start; padding: 8px 8px 0 10px; }
.dlg-foot > svg { margin-top: 7px; }
.tips { color: #6f9fe0; margin: 7px 0 0 5px; flex: 1; line-height: 16px; }
.btn { width: 77px; height: 29px; line-height: 27px; text-align: center; background: #e1e1e1; border: 1px solid #adadad; color: #222; }
.btn-pri { width: 86px; margin-right: 29px; background: #e5f1fb; border-color: #0078d7; }
.dlg-grip { position: absolute; right: 2px; bottom: 2px; }

/* annotations */
.arrows { position: absolute; left: 1015px; top: 500px; z-index: 6; overflow: visible; filter: drop-shadow(2px 3px 2px rgba(0,0,0,.3)); }
.cursor { position: absolute; left: 1339px; top: 588px; z-index: 7; }

/* watermark */
.wmark { position: absolute; left: 1349px; top: 955px; z-index: 4; display: flex; opacity: .92; }
.wm-logo { flex: none; }
.wm-text { display: flex; flex-direction: column; margin-top: -3px; }
.wm-cn { font: 700 21px/24px "Noto Sans CJK SC", sans-serif; color: #5f9fd8; white-space: nowrap; }
.wm-en { font: 700 16px/18px "Liberation Sans", sans-serif; color: #70c58c; white-space: nowrap; margin-top: 3px; }
```
